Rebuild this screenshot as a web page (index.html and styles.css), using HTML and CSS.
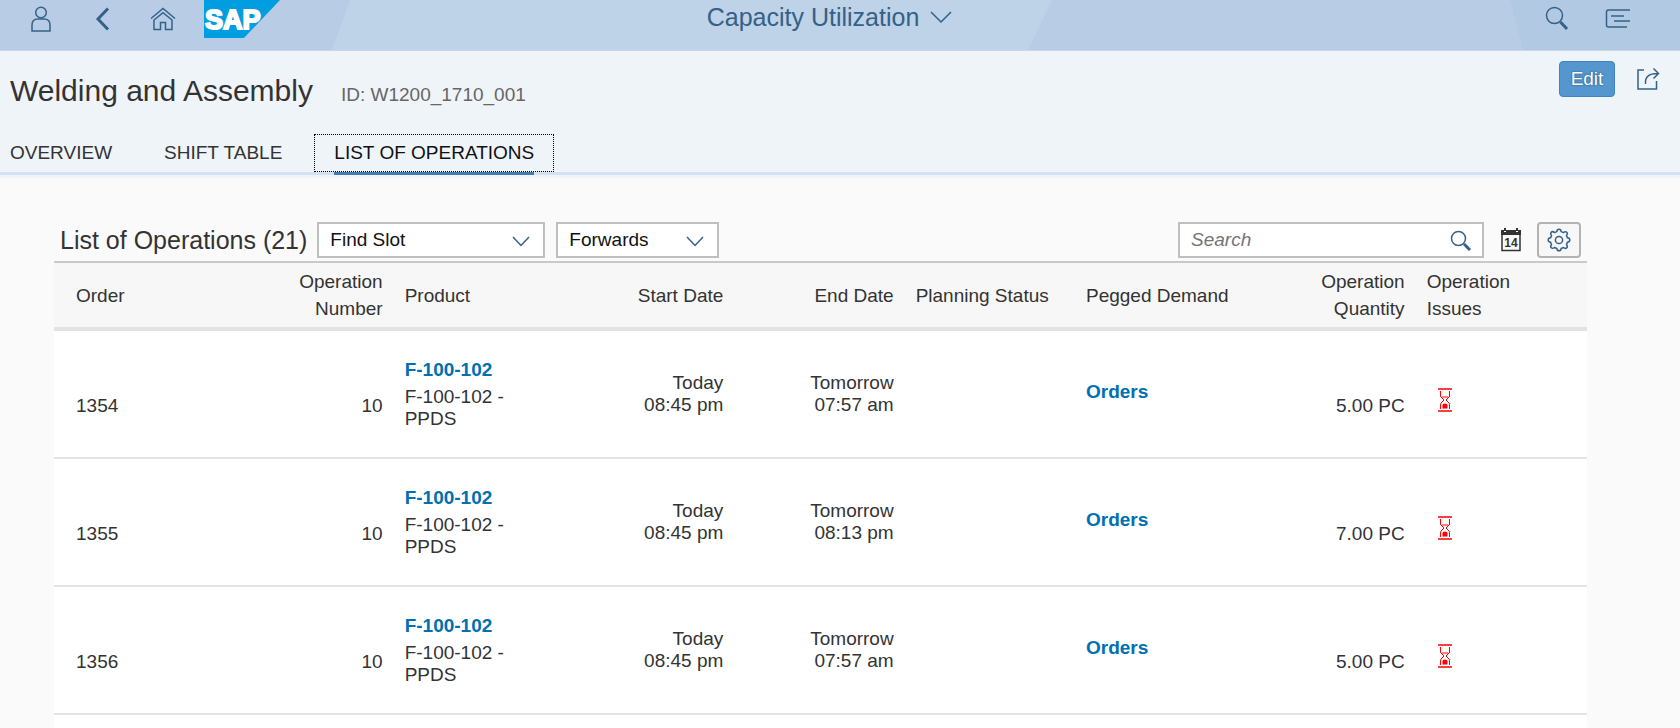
FILE: index.html
```html
<!DOCTYPE html>
<html lang="en">
<head>
<meta charset="utf-8">
<title>Capacity Utilization</title>
<link rel="stylesheet" href="styles.css">
</head>
<body>
<header class="shell">
  <svg class="shell-bg" viewBox="0 0 1680 51" preserveAspectRatio="none" aria-hidden="true">
    <path d="M350 0H1052L1028 51H332Z" fill="#bed2e8"/>
    <path d="M1510 0H1680V51H1523Z" fill="#b1c9e2"/>
  </svg>
  <nav class="shell-left" aria-label="Shell">
    <button class="icon-btn" aria-label="Me">
      <svg width="22" height="26" viewBox="0 0 22 26"><circle cx="11" cy="6.5" r="5.3"/><path d="M2 25V19Q2 13 8 13H14Q20 13 20 19V25Z"/></svg>
    </button>
    <button class="icon-btn" aria-label="Back">
      <svg width="16" height="24" viewBox="0 0 16 24"><path d="M14 1.5L4 12L14 22.5" stroke-width="3"/></svg>
    </button>
    <button class="icon-btn" aria-label="Home">
      <svg width="26" height="24" viewBox="0 0 26 24"><path d="M1 11.5L13 1.5L25 11.5M4 13V22.5H10.5V15.5H15.5V22.5H22V13L13 5.7Z"/></svg>
    </button>
    <a class="logo" href="#" aria-label="SAP">
      <svg width="76" height="38" viewBox="0 0 76 38"><path d="M0 0H76L40 38H0Z" fill="#009de0" stroke="none"/><text x="1" y="29">SAP</text></svg>
    </a>
  </nav>
  <button class="app-title">Capacity Utilization
    <svg width="24" height="14" viewBox="0 0 24 14"><path d="M2 2L12 12L22 2"/></svg>
  </button>
  <div class="shell-right">
    <button class="icon-btn" aria-label="Search">
      <svg width="24" height="25" viewBox="0 0 24 25"><circle cx="9.5" cy="9.5" r="8"/><path d="M15.5 16L22 23" stroke-width="3"/></svg>
    </button>
    <button class="icon-btn" aria-label="Notifications">
      <svg width="26" height="21" viewBox="0 0 26 21"><path d="M25 2H3.5Q1.500 2 1.500 4V17Q1.500 19 3.500 19H22M6 8H19M9 13H25"/></svg>
    </button>
  </div>
</header>

<section class="object-header">
  <div class="title-row">
    <h1 class="title">Welding and Assembly</h1>
    <p class="object-id">ID: W1200_1710_001</p>
    <div class="actions">
      <button class="edit">Edit</button>
      <button class="icon-btn" aria-label="Share">
        <svg width="24" height="24" viewBox="0 0 24 24"><path d="M8 3H2V22H20.5V14M9.5 17Q8.500 6.500 21.500 6.500M17.500 1.500L22.500 6.500L17.500 11.500"/></svg>
      </button>
    </div>
  </div>
  <nav class="tabs" aria-label="Sections">
    <button class="tab">OVERVIEW</button>
    <button class="tab">SHIFT TABLE</button>
    <button class="tab tab-active" aria-current="true">LIST OF OPERATIONS</button>
  </nav>
</section>

<main class="content">
  <div class="toolbar">
    <h2 class="list-title">List of Operations (21)</h2>
    <div class="field field-slot">
      <select aria-label="Strategy"><option>Find Slot</option></select>
      <svg width="18" height="11" viewBox="0 0 18 11"><path d="M1 1L9 9.500L17 1"/></svg>
    </div>
    <div class="field field-direction">
      <select aria-label="Direction"><option>Forwards</option></select>
      <svg width="18" height="11" viewBox="0 0 18 11"><path d="M1 1L9 9.500L17 1"/></svg>
    </div>
    <div class="field field-search">
      <input type="text" placeholder="Search" aria-label="Search">
      <svg width="21" height="21" viewBox="0 0 21 21"><circle cx="8.500" cy="8.500" r="7"/><path d="M14 14L20 20" stroke-width="3"/></svg>
    </div>
    <button class="tool" aria-label="Calendar">
      <svg class="calendar" width="20" height="24" viewBox="0 0 20 24"><path d="M1 3H19V22.500H1Z" fill="none" stroke="#333"/><path d="M0 2H3V0H5V2H15V0H17V2H20V7H0Z" fill="#333" stroke="none"/><path d="M3 3H5V4H3ZM15 3H17V4H15Z" fill="#fff" stroke="none"/><text x="10" y="19">14</text></svg>
    </button>
    <button class="tool tool-framed" aria-label="Settings">
      <svg width="24" height="24" viewBox="0 0 24 24"><circle cx="12" cy="12" r="3.600"/><path d="M9.800 3.600Q10 1.200 12 1.200T14.200 3.600Q15.500 4 16.400 4.500Q18.500 3 19.800 4.200T19.500 7.600Q20 8.500 20.400 9.800Q22.800 10 22.800 12T20.400 14.200Q20 15.500 19.500 16.400Q21 18.500 19.800 19.800T16.400 19.500Q15.500 20 14.200 20.400Q14 22.800 12 22.800T9.800 20.400Q8.500 20 7.600 19.500Q5.500 21 4.200 19.800T4.500 16.400Q4 15.500 3.600 14.200Q1.200 14 1.200 12T3.600 9.800Q4 8.500 4.500 7.600Q3 5.500 4.200 4.200T7.600 4.500Q8.500 4 9.800 3.600Z"/></svg>
    </button>
  </div>

  <table class="operations">
    <thead>
      <tr>
        <th scope="col">Order</th>
        <th scope="col" class="num">Operation Number</th>
        <th scope="col">Product</th>
        <th scope="col" class="num">Start Date</th>
        <th scope="col" class="num">End Date</th>
        <th scope="col">Planning Status</th>
        <th scope="col">Pegged Demand</th>
        <th scope="col" class="num">Operation Quantity</th>
        <th scope="col">Operation<br>Issues</th>
      </tr>
    </thead>
    <tbody>
      <tr>
        <td class="low">1354</td>
        <td class="low num">10</td>
        <td><a class="link" href="#">F-100-102</a>F-100-102 - PPDS</td>
        <td class="num">Today<br>08:45 pm</td>
        <td class="num">Tomorrow<br>07:57 am</td>
        <td></td>
        <td><a class="link" href="#">Orders</a></td>
        <td class="low num">5.00 PC</td>
        <td class="issue"><svg width="14" height="24" viewBox="0 0 14 24" role="img" aria-label="Delay"><path d="M0 1H14M0 23H14"/><path d="M2.500 3V8Q2.500 9 4 10L6 12L4 14Q2.500 15 2.500 17V21M11.500 3V8Q11.500 9 10 10L8 12L10 14Q11.500 15 11.500 17V21M4 9H10" stroke-width="1"/><path d="M4.500 20.500V17Q4.500 15.500 7 15.500Q9.500 15.500 9.500 17V20.500Z" fill="#f00" stroke="none"/></svg></td>
      </tr>
      <tr>
        <td class="low">1355</td>
        <td class="low num">10</td>
        <td><a class="link" href="#">F-100-102</a>F-100-102 - PPDS</td>
        <td class="num">Today<br>08:45 pm</td>
        <td class="num">Tomorrow<br>08:13 pm</td>
        <td></td>
        <td><a class="link" href="#">Orders</a></td>
        <td class="low num">7.00 PC</td>
        <td class="issue"><svg width="14" height="24" viewBox="0 0 14 24" role="img" aria-label="Delay"><path d="M0 1H14M0 23H14"/><path d="M2.500 3V8Q2.500 9 4 10L6 12L4 14Q2.500 15 2.500 17V21M11.500 3V8Q11.500 9 10 10L8 12L10 14Q11.500 15 11.500 17V21M4 9H10" stroke-width="1"/><path d="M4.500 20.500V17Q4.500 15.500 7 15.500Q9.500 15.500 9.500 17V20.500Z" fill="#f00" stroke="none"/></svg></td>
      </tr>
      <tr>
        <td class="low">1356</td>
        <td class="low num">10</td>
        <td><a class="link" href="#">F-100-102</a>F-100-102 - PPDS</td>
        <td class="num">Today<br>08:45 pm</td>
        <td class="num">Tomorrow<br>07:57 am</td>
        <td></td>
        <td><a class="link" href="#">Orders</a></td>
        <td class="low num">5.00 PC</td>
        <td class="issue"><svg width="14" height="24" viewBox="0 0 14 24" role="img" aria-label="Delay"><path d="M0 1H14M0 23H14"/><path d="M2.500 3V8Q2.500 9 4 10L6 12L4 14Q2.500 15 2.500 17V21M11.500 3V8Q11.500 9 10 10L8 12L10 14Q11.500 15 11.500 17V21M4 9H10" stroke-width="1"/><path d="M4.500 20.500V17Q4.500 15.500 7 15.500Q9.500 15.500 9.500 17V20.500Z" fill="#f00" stroke="none"/></svg></td>
      </tr>
    </tbody>
  </table>
</main>
</body>
</html>
```
FILE: styles.css
```css
* {
  box-sizing: border-box;
}

body {
  display: flex;
  flex-direction: column;
  min-height: 100vh;
  margin: 0;
  background: #fafafa;
  color: #333;
  font-family: "Liberation Sans", Arial, sans-serif;
  font-size: 19px;
  line-height: 22px;
}

h1,
h2,
p {
  margin: 0;
  font-weight: normal;
}

button,
input,
select {
  font: inherit;
  color: inherit;
}

button {
  padding: 0;
  border: 0;
  background: none;
}

svg {
  display: block;
  fill: none;
  stroke: #346187;
  stroke-width: 1.5px;
}

/* Shell bar */
.shell {
  position: relative;
  display: grid;
  grid-template-columns: 1fr auto 1fr;
  height: 51px;
  background: #b8cde5;
  border-bottom: 1px solid #c5d8ec;
}

.shell-bg {
  position: absolute;
  width: 100%;
  height: 100%;
  stroke: none;
}

.shell-left,
.shell-right,
.app-title {
  position: relative;
  display: flex;
  height: 37px;
  align-items: center;
}

.shell-left {
  padding-left: 10px;
}

.shell-left .icon-btn {
  width: 61px;
}

.shell-right {
  justify-content: flex-end;
  padding-right: 32px;
}

.shell-right .icon-btn {
  width: 61px;
}

.icon-btn {
  display: flex;
  align-items: center;
  justify-content: center;
}

.logo {
  margin-left: 11px;
}

.logo text {
  fill: #fff;
  stroke: #fff;
  stroke-width: 2px;
  font-size: 27px;
  font-weight: bold;
}

.app-title {
  gap: 10px;
  height: 34px;
  padding-right: 20px;
  font-size: 25px;
  line-height: 34px;
  color: #346187;
}

/* Object header */
.object-header {
  background: #eff4f9;
  padding-bottom: 3px;
}

.title-row {
  display: flex;
  min-height: 83px;
  padding: 10px 20px 0 10px;
}

.title {
  padding-top: 13px;
  font-size: 30px;
  line-height: 34px;
}

.object-id {
  padding: 23px 0 0 28px;
  color: #666;
}

.actions {
  display: flex;
  align-items: flex-start;
  gap: 21px;
  margin-left: auto;
}

.actions .icon-btn {
  height: 35px;
}

.edit {
  width: 56px;
  height: 36px;
  border: 1px solid #3d84c6;
  border-radius: 4px;
  background: #5496cd;
  color: #fff;
  text-shadow: 0 0 2px #1d4a70;
}

.tabs {
  display: flex;
  gap: 12px;
  border-bottom: 3px solid #d3e2f0;
}

.tab {
  position: relative;
  height: 38px;
  padding: 0 20px;
}

.tab:first-child {
  padding-left: 10px;
}

.tab-active {
  color: #111;
  outline: 1px dotted #000;
  outline-offset: -1px;
}

.tab-active::after {
  content: "";
  position: absolute;
  right: 20px;
  bottom: -3px;
  left: 20px;
  height: 3px;
  background: #427cac;
}

/* List toolbar */
.content {
  display: flex;
  flex: 1;
  flex-direction: column;
  padding: 44px 93px 0 54px;
}

/* White sheet continues below the last row */
.content::after {
  content: "";
  flex: 1;
  background: #fff;
}

.toolbar {
  display: flex;
  align-items: center;
  padding: 0 6px 3px;
}

.list-title {
  margin-right: 10px;
  font-size: 25px;
  line-height: 34px;
}

.field {
  position: relative;
}

.field select,
.field input {
  display: block;
  width: 100%;
  height: 36px;
  padding: 0 40px 0 11px;
  border: 2px solid #bfbfbf;
  border-radius: 0;
  background: #fff;
  color: #111;
  appearance: none;
}

.field input::placeholder {
  color: #757575;
  font-style: italic;
}

.field svg {
  position: absolute;
  top: 14px;
  right: 15px;
  pointer-events: none;
}

.field-search svg {
  top: 8px;
  right: 13px;
}

.field-slot {
  width: 228px;
  margin-right: 11px;
}

.field-direction {
  width: 163px;
}

.field-search {
  width: 306px;
  margin-left: auto;
}

.tool {
  display: flex;
  align-items: center;
  justify-content: center;
  width: 44px;
  height: 36px;
  margin: 0 4px 0 5px;
}

.tool-framed {
  margin: 0;
  border: 2px solid #b3b3b3;
  border-radius: 4px;
  background: #f7f7f7;
}

.calendar text {
  fill: #333;
  stroke: none;
  font-size: 12px;
  font-weight: bold;
  text-anchor: middle;
}

/* Operations table */
.operations {
  width: 100%;
  table-layout: fixed;
  border-collapse: separate;
  border-spacing: 0;
  border-top: 2px solid #c9c9c9;
  background: #fff;
}

.operations th {
  height: 68px;
  padding: 0 12px 0 10px;
  background: #f7f7f7;
  border-bottom: 4px solid #e3e3e3;
  font-weight: normal;
  line-height: 27px;
  text-align: left;
}

.operations td {
  height: 128px;
  padding: 0 12px 0 10px;
  border-bottom: 2px solid #e5e5e5;
}

.operations th:first-child,
.operations td:first-child {
  padding-left: 22px;
}

.operations .num {
  text-align: right;
}

.operations .low {
  padding-top: 23px;
}

.operations .issue {
  padding: 11px 21px 0;
}

.issue svg {
  stroke: #f00;
}

.link {
  display: block;
  margin-bottom: 5px;
  color: #0070b1;
  font-weight: bold;
  text-decoration: none;
}
```
